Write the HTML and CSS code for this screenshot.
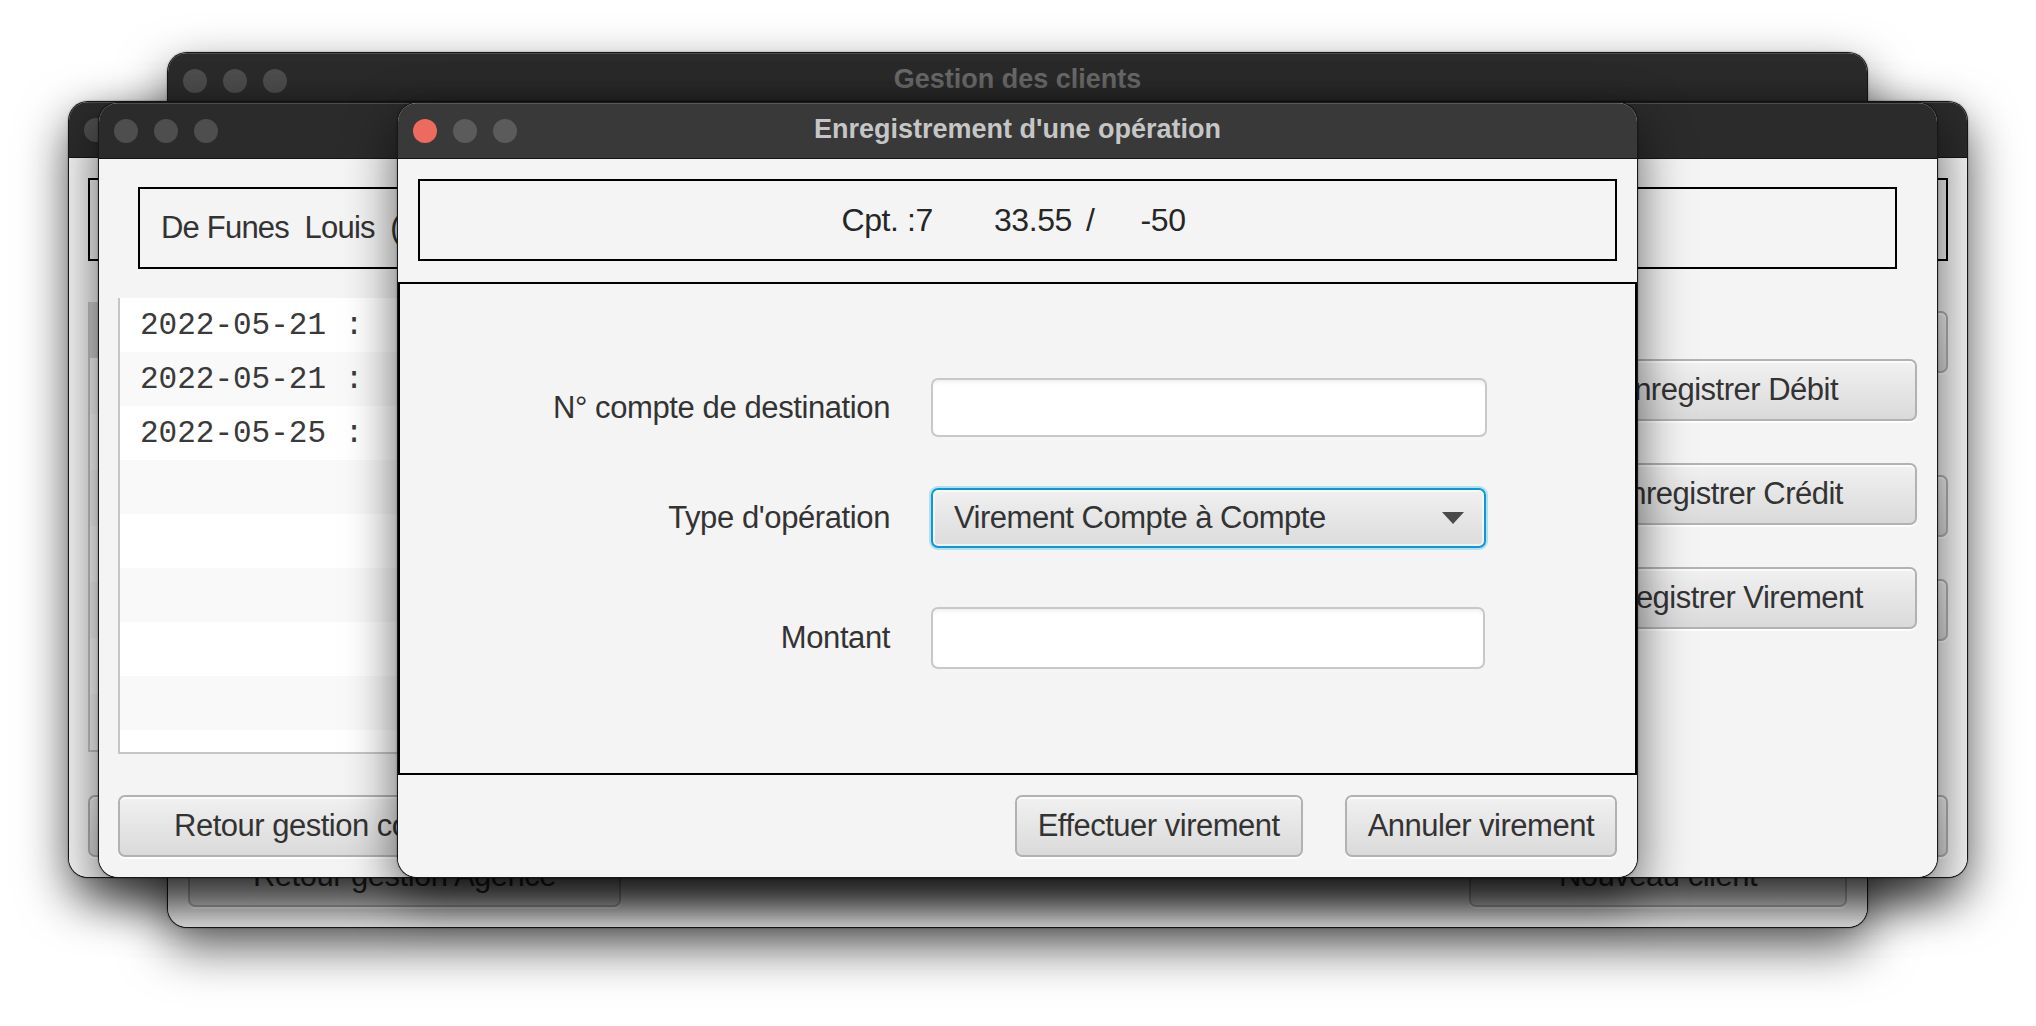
FILE: index.html
```html
<!DOCTYPE html>
<html lang="fr">
<head>
<meta charset="utf-8">
<title>Enregistrement d'une opération</title>
<link rel="stylesheet" href="styles.css">
</head>
<body>
<div class="desktop">

  <section class="win win-back">
    <header class="titlebar inactive">
      <div class="lights"><span class="light"></span><span class="light"></span><span class="light"></span></div>
      <div class="title">Gestion des clients</div>
    </header>
    <div class="content back-content">
      <div class="bottom-bar spread back-bar">
        <button class="btn btn-agence">Retour gestion Agence</button>
        <button class="btn btn-nouveau">Nouveau client</button>
      </div>
    </div>
  </section>

  <section class="win win-ml">
    <header class="titlebar inactive">
      <div class="lights"><span class="light"></span><span class="light"></span><span class="light"></span></div>
      <div class="title"></div>
    </header>
    <div class="content ml-content">
      <div class="infobox ml-box"></div>
      <div class="main-row ml-main">
        <ul class="list ml-list">
          <li class="cell selected"></li>
          <li class="cell"></li>
          <li class="cell"></li>
          <li class="cell"></li>
          <li class="cell"></li>
          <li class="cell"></li>
          <li class="cell"></li>
          <li class="cell"></li>
        </ul>
        <div class="side-col ml-side">
          <button class="btn side-btn"></button>
          <div class="ml-spacer"></div>
          <button class="btn side-btn"></button>
          <button class="btn side-btn"></button>
        </div>
      </div>
      <div class="bottom-bar spread ml-bar">
        <button class="btn ml-left-btn"></button>
        <button class="btn side-btn"></button>
      </div>
    </div>
  </section>

  <section class="win win-mid">
    <header class="titlebar inactive">
      <div class="lights"><span class="light"></span><span class="light"></span><span class="light"></span></div>
      <div class="title"></div>
    </header>
    <div class="content mid-content">
      <div class="infobox name-box"><span class="name-text">De Funes  Louis  (</span></div>
      <div class="main-row mid-main">
        <ul class="list mid-list">
          <li class="cell">2022-05-21 :</li>
          <li class="cell">2022-05-21 :</li>
          <li class="cell">2022-05-25 :</li>
          <li class="cell"></li>
          <li class="cell"></li>
          <li class="cell"></li>
          <li class="cell"></li>
          <li class="cell"></li>
        </ul>
        <div class="side-col mid-side">
          <button class="btn side-btn">Enregistrer Débit</button>
          <button class="btn side-btn">Enregistrer Crédit</button>
          <button class="btn side-btn">Enregistrer Virement</button>
        </div>
      </div>
      <div class="bottom-bar mid-bar">
        <button class="btn back-btn">Retour gestion comptes</button>
      </div>
    </div>
  </section>

  <section class="win win-dlg">
    <header class="titlebar active">
      <div class="lights"><span class="light close"></span><span class="light"></span><span class="light"></span></div>
      <div class="title">Enregistrement d'une opération</div>
    </header>
    <div class="content dlg-content">
      <div class="dlg-head">
        <div class="infobox acct-box">
          <span class="acct-num">Cpt. :7</span>
          <span class="acct-bal">33.55</span>
          <span class="acct-sep">/</span>
          <span class="acct-dec">-50</span>
        </div>
      </div>
      <div class="form-box">
        <div class="form-rows">
          <div class="form-row">
            <label class="form-label" for="dest">N° compte de destination</label>
            <input class="field" id="dest" type="text">
          </div>
          <div class="form-row">
            <label class="form-label">Type d'opération</label>
            <div class="combo">
              <span class="combo-text">Virement Compte à Compte</span>
              <span class="combo-arrow"></span>
            </div>
          </div>
          <div class="form-row amount-row">
            <label class="form-label" for="montant">Montant</label>
            <input class="field" id="montant" type="text">
          </div>
        </div>
      </div>
      <div class="dlg-actions">
        <button class="btn">Effectuer virement</button>
        <button class="btn">Annuler virement</button>
      </div>
    </div>
  </section>

</div>
</body>
</html>
```

FILE: styles.css
```css
* { box-sizing: border-box; }

html, body {
  margin: 0;
  padding: 0;
  background: #ffffff;
  overflow: hidden;
}

body {
  font-family: "Liberation Sans", Arial, sans-serif;
  color: #333333;
}

.desktop {
  position: relative;
  width: 2036px;
  height: 1026px;
}

/* ---------- windows ---------- */
.win {
  position: absolute;
  display: flex;
  flex-direction: column;
  border: 1px solid rgba(0, 0, 0, 0.9);
  border-radius: 20px;
  overflow: hidden;
  background: #f4f4f4;
  box-shadow: 0 20px 50px rgba(0, 0, 0, 0.6), 0 0 2px rgba(0, 0, 0, 0.4);
}

.win-back { left: 167px; top: 52px; width: 1701px; height: 876px; }
.win-ml   { left: 68px;  top: 101px; width: 1900px; height: 777px; }
.win-mid  { left: 98px;  top: 102px; width: 1840px; height: 776px; }
.win-dlg  { left: 397px; top: 102px; width: 1241px; height: 776px; }

.titlebar {
  flex: none;
  height: 56px;
  display: grid;
  grid-template-columns: 1fr auto 1fr;
  align-items: center;
  border-bottom: 1px solid #141414;
  box-shadow: inset 0 1px 0 rgba(255, 255, 255, 0.16);
}
.titlebar.inactive { background: #2b2b2b; }
.titlebar.active { background: #393939; }

.lights {
  display: flex;
  gap: 16px;
  margin-left: 15px;
}
.light {
  width: 24px;
  height: 24px;
  border-radius: 50%;
  background: #4e4e4e;
}
.active .light { background: #5b5b5b; }
.active .light.close { background: #ec6a5e; }

.title {
  font-weight: bold;
  font-size: 27px;
  padding-bottom: 3px;
  white-space: nowrap;
}
.inactive .title { color: #6b6b6b; }
.active .title { color: #c6c6c6; }

.content {
  flex: 1;
  display: flex;
  flex-direction: column;
  background: #f4f4f4;
}

/* ---------- shared controls ---------- */
.infobox {
  border: 2px solid #000;
  display: flex;
  align-items: center;
  font-size: 32px;
  letter-spacing: -0.4px;
}

.btn {
  font-family: "Liberation Sans", Arial, sans-serif;
  font-size: 31px;
  letter-spacing: -0.5px;
  color: #333;
  height: 62px;
  padding: 0 21px;
  border: 2px solid #b2b2b2;
  border-radius: 7px;
  background: linear-gradient(#f1f1f1, #dadada);
  box-shadow: inset 0 2px 0 rgba(255, 255, 255, 0.7), 0 2px 0 rgba(255, 255, 255, 0.9);
  white-space: nowrap;
  cursor: default;
}

.list {
  list-style: none;
  margin: 0;
  padding: 0;
  background: #fff;
  border-left: 2px solid #c6c6c6;
  border-bottom: 2px solid #c6c6c6;
}
.cell {
  height: 54px;
  display: flex;
  align-items: center;
  padding-left: 20px;
  font-family: "Liberation Mono", "DejaVu Sans Mono", monospace;
  font-size: 31px;
  color: #3a3a3a;
  white-space: pre;
  background: #ffffff;
}
.cell:nth-child(even) { background: #f9f9f9; }

.main-row { display: flex; }
.side-col { display: flex; flex-direction: column; }

.bottom-bar { display: flex; }
.bottom-bar.spread { justify-content: space-between; }

/* ---------- back window ---------- */
.back-content { justify-content: flex-end; background: #ececec; }
.back-bar { padding: 0 20px 20px 20px; }
.btn-agence { width: 433px; }
.btn-nouveau { width: 378px; }

/* ---------- middle-left window ---------- */
.ml-content { padding: 20px 19px 20px 19px; }
.ml-box { height: 83px; }
.ml-main { margin-top: 41px; height: 450px; justify-content: space-between; }
.ml-list { width: 1400px; }
.ml-list .cell { height: 56px; }
.ml-list .cell.selected { background: #cfcfcf; }
.ml-side { padding-top: 9px; gap: 42px; }
.ml-spacer { height: 102px; margin: -42px 0; }
.side-btn { width: 382px; }
.ml-bar { margin-top: 43px; }
.ml-left-btn { width: 430px; }

/* ---------- middle window ---------- */
.mid-content { padding: 0 20px 20px 19px; }
.name-box {
  margin: 28px 20px 0 20px;
  height: 82px;
  padding-left: 21px;
  font-size: 31px;
  letter-spacing: -0.8px;
}
.name-text { white-space: pre; }
.mid-main { margin-top: 29px; height: 456px; gap: 40px; }
.mid-list { flex: 1; }
.mid-side { padding-top: 61px; gap: 42px; }
.mid-bar { margin-top: 41px; }
.back-btn { padding: 0 54px; }

/* ---------- dialog ---------- */
.dlg-head { padding: 20px 20px 21px 20px; }
.acct-box {
  height: 82px;
  justify-content: center;
  color: #262626;
}
.acct-num { margin-left: -8px; }
.acct-bal { margin-left: 61px; }
.acct-sep { margin-left: 14px; }
.acct-dec { margin-left: 46px; }

.form-box {
  height: 493px;
  border: 2px solid #000;
}
.form-rows {
  display: flex;
  flex-direction: column;
  gap: 51px;
  padding-top: 94px;
}
.form-row {
  display: grid;
  grid-template-columns: 490px 556px;
  column-gap: 41px;
  align-items: center;
}
.amount-row { margin-top: 8px; }
.form-label {
  text-align: right;
  font-size: 31px;
  letter-spacing: -0.4px;
  color: #333;
  white-space: nowrap;
}
.field {
  height: 59px;
  width: 556px;
  border: 2px solid #c8c8c8;
  border-radius: 7px;
  background: #fff;
  box-shadow: inset 0 4px 4px -2px rgba(0, 0, 0, 0.07);
  font-family: "Liberation Sans", Arial, sans-serif;
  font-size: 31px;
  outline: none;
}
.amount-row .field { height: 62px; width: 554px; }

.combo {
  height: 60px;
  width: 555px;
  display: flex;
  align-items: center;
  justify-content: space-between;
  padding: 0 20px 0 21px;
  border: 2px solid #0a9bd4;
  border-radius: 7px;
  background: linear-gradient(#f0f0f0, #dcdcdc);
  box-shadow: 0 0 0 2px #b4dff1, inset 0 0 0 2px rgba(255, 255, 255, 0.6);
}
.combo-text {
  font-size: 31px;
  letter-spacing: -0.5px;
  color: #333;
  white-space: nowrap;
}
.combo-arrow {
  width: 0;
  height: 0;
  border-left: 11px solid transparent;
  border-right: 11px solid transparent;
  border-top: 12px solid #4a4a4a;
}

.dlg-actions {
  display: flex;
  justify-content: flex-end;
  gap: 42px;
  padding: 20px;
}
```
